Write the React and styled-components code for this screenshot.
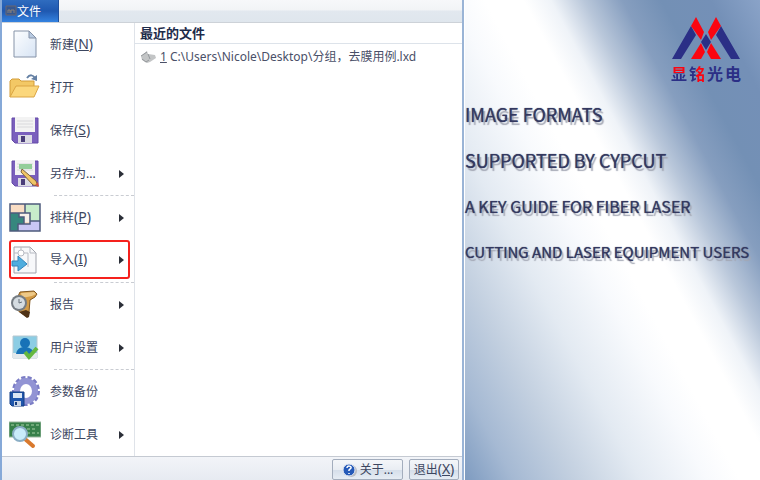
import React from "react";
import styled, { createGlobalStyle } from "styled-components";

const GlobalStyle = createGlobalStyle`
  * {
    box-sizing: border-box;
  }
  body {
    margin: 0;
    font-family: "Noto Sans", "Noto Sans CJK SC", sans-serif;
    font-size: 12px;
    color: #3c4660;
  }
  button {
    font: inherit;
    color: inherit;
    cursor: pointer;
  }
`;

const Page = styled.div`
  display: grid;
  grid-template-columns: minmax(0, 464fr) minmax(0, 296fr);
  min-height: 100vh;
`;

const Window = styled.section`
  display: flex;
  flex-direction: column;
  border-left: 2px solid #86a9d8;
  border-right: 2px solid #9ab4d6;
  background: #fff;
`;

const TitleBar = styled.header`
  display: flex;
  height: 23px;
  border-bottom: 1px solid #cdd2d8;
  background: linear-gradient(#f7f8fa 0%, #f2f4f6 45%, #e2e8ef 50%, #dfe6ed 100%);
`;

const FileTab = styled.button`
  display: flex;
  align-items: center;
  width: 57px;
  padding: 0 3px;
  border: 0;
  border-right: 1px solid #1f4f9c;
  background: linear-gradient(#2f6cbf 0%, #1f58b0 50%, #3482e0 100%);
  color: #fff;
`;

const Body = styled.div`
  display: flex;
  flex: 1;
`;

const Menu = styled.nav`
  display: flex;
  flex-direction: column;
  width: 133px;
  border-right: 1px solid #dfe3e9;
`;

const MenuItem = styled.button`
  display: flex;
  align-items: center;
  gap: 9px;
  height: ${(props) => (props.$marked ? "39px" : "43px")};
  margin: ${(props) => (props.$marked ? "1px 4px 3px 7px" : "0")};
  padding: ${(props) => (props.$marked ? "0 4px 0 0" : "0 10px 0 7px")};
  border: ${(props) => (props.$marked ? "2px solid #f5211d" : "0")};
  border-radius: 3px;
  background: none;
  text-align: left;

  svg:first-child {
    flex: none;
    margin-left: ${(props) => (props.$marked ? "-2px" : "0")};
  }
`;

const Label = styled.span`
  flex: 1;
  line-height: 20px;
  white-space: nowrap;
`;

const Hotkey = styled.span`
  font-size: 14px;
`;

const Separator = styled.hr`
  width: 80px;
  height: 1px;
  margin: 0 0 0 auto;
  border: 0;
  border-top: 1px dashed #c9ccd2;
`;

const Recent = styled.main`
  flex: 1;
  min-width: 0;
`;

const RecentTitle = styled.h2`
  margin: 0;
  padding: 0 5px;
  border-bottom: 1px solid #dde3ea;
  font-size: 13px;
  line-height: 20px;
  color: #1d2b4a;
`;

const RecentFile = styled.a`
  display: flex;
  align-items: center;
  gap: 4px;
  padding: 0 5px;
  line-height: 26px;
  color: #4a5068;
  text-decoration: none;
  white-space: nowrap;
`;

const Footer = styled.footer`
  display: flex;
  justify-content: flex-end;
  gap: 6px;
  padding: 2px 3px 1px;
  border-top: 1px solid #c5cad2;
  background: linear-gradient(#f2f4f8, #e6eaf1);
`;

const FooterButton = styled.button`
  display: flex;
  align-items: center;
  justify-content: center;
  gap: 2px;
  width: ${(props) => (props.$wide ? "71px" : "50px")};
  height: 21px;
  padding: 0;
  border: 1px solid #a3adbd;
  border-radius: 2px;
  background: linear-gradient(#f4f6f9 0%, #e9edf3 50%, #d5deea 52%, #e6ecf4 100%);
  line-height: 18px;
  white-space: nowrap;
`;

const Banner = styled.aside`
  display: flex;
  flex-direction: column;
  border-left: 1px solid #fff;
  background: linear-gradient(
    62deg,
    #7e9bc0 0%,
    #a5b9d3 9%,
    #c3d0e0 20%,
    #e3eaf2 32%,
    #f8fafd 44%,
    #ffffff 50%,
    #ffffff 57%,
    #eff3f8 62%,
    #b9c7da 68%,
    #869ebf 75%,
    #7390b5 82%,
    #7490b7 91%,
    #8aa3c8 100%
  );
`;

const Brand = styled.div`
  display: flex;
  flex-direction: column;
  align-items: center;
  align-self: flex-end;
  padding: 17px 19px 0 0;
`;

const BrandName = styled.div`
  display: flex;
  gap: 2px;
  font-family: "Noto Sans CJK SC", sans-serif;
  font-size: 16px;
  font-weight: 700;
  line-height: 24px;
  color: #2b2f86;
`;

const TwoTone = styled.span`
  background: linear-gradient(${(props) => props.$tones});
  background-clip: text;
  color: transparent;
`;

const Headline = styled.h1`
  display: flex;
  flex-direction: column;
  margin: 0;
  padding-top: 6px;
  font-family: "Noto Sans CJK SC", sans-serif;
  font-weight: 400;
  line-height: 46px;
  color: #343960;
  text-shadow: 0 0 1px #3c4168, 2px 3px 1px #a3a7b4;
  white-space: nowrap;
`;

const HeadlineRow = styled.span`
  font-size: ${(props) => props.$size}px;
`;

const Icon = ({ children }) => (
  <svg width="32" height="32" viewBox="0 0 32 32" aria-hidden="true">
    {children}
  </svg>
);

const Floppy = () => (
  <>
    <path d="M3 3h26v25H6l-3-3z" fill="#7a5fbd" stroke="#654ba8" />
    <path d="M6 2h20v15H6z" fill="#f3f3f3" />
    <path d="M8 6h16M8 9h16M8 12h16" stroke="#d9d9dc" />
    <path d="M9 20h14v8H9z" fill="#dcdbe4" />
    <path d="M12 21h4v6h-4z" fill="#4a3d79" />
  </>
);

const icons = {
  new: (
    <Icon>
      <defs>
        <linearGradient id="paper" x1="0" y1="0" x2="1" y2="1">
          <stop offset="0" stopColor="#fdfeff" />
          <stop offset="1" stopColor="#d7e4f4" />
        </linearGradient>
      </defs>
      <path d="M5 2h15l7 7v19H5z" fill="url(#paper)" stroke="#8693a8" />
      <path d="M20 2v7h7z" fill="#b9cbe2" stroke="#8693a8" />
    </Icon>
  ),
  open: (
    <Icon>
      <path d="M1 25V9l2-2h7l2 2h13v5" fill="#f3c865" stroke="#d39c38" />
      <path d="M1 25l6-11h23l-5 11z" fill="#fbd77c" stroke="#dba544" />
      <path d="M18 6c3-4 6-3 8 0" fill="none" stroke="#6480a4" strokeWidth="2" />
      <path d="M22 7l6 2V3z" fill="#6480a4" />
    </Icon>
  ),
  save: (
    <Icon>
      <Floppy />
    </Icon>
  ),
  saveAs: (
    <Icon>
      <Floppy />
      <path d="M10 6h13v5H10z" fill="#93ce9a" />
      <path d="M13 11l14 12 2 5-5-1-12-13z" fill="#f0c565" stroke="#7d6540" />
      <path d="M26 27l4 2-1-5z" fill="#d15440" />
    </Icon>
  ),
  nest: (
    <Icon>
      <path d="M1 2h30v27H1z" fill="#f9ddc4" />
      <path d="M16 2h15v17H21v-8h-5z" fill="#c8edcb" />
      <path d="M9 11h12v9H9z" fill="#f7f0e8" />
      <path d="M1 11h9v4h5v7H9v7H1z" fill="#36877e" />
      <path d="M9 22h12v-3h10v10H9z" fill="#c9c6f4" />
      <path
        d="M1 2h30v27H1zM1 11h9v4h5v7H9v7M16 2v9h5v8h10M10 11h6M15 22h6v-3"
        fill="none"
        stroke="#4e5b7c"
        strokeWidth="1.5"
      />
    </Icon>
  ),
  import: (
    <Icon>
      <path d="M5 3h16l6 6v20H5z" fill="#f7f8fa" stroke="#a0a3ac" />
      <path d="M21 3v6h6M5 9h4M14 9h5v14M12 3v3" fill="none" stroke="#b7bac2" />
      <circle cx="12" cy="9" r="3" fill="#fff" stroke="#b7bac2" />
      <path d="M3 17h6v-5l9 8-9 7v-5H3z" fill="#4fadde" stroke="#3285bb" />
    </Icon>
  ),
  report: (
    <Icon>
      <path d="M11 3l14-1 3 3-2 3-5 3-1 12-2 5-14-10z" fill="#d39a45" stroke="#825821" />
      <path d="M12 4l13-1 2 2-4 2-10 2z" fill="#eec987" />
      <path d="M20 28l1-5-4-2-7 2 8 6z" fill="#4f3216" />
      <circle cx="10" cy="14" r="8" fill="#757c83" />
      <circle cx="10" cy="14" r="6" fill="#d5dce1" />
      <path d="M10 10v4l3-1" fill="none" stroke="#67717b" />
    </Icon>
  ),
  user: (
    <Icon>
      <path d="M4 4h24v22H4z" fill="#8ccde4" stroke="#b6c8d0" />
      <path d="M4 21h24v5H4z" fill="#e3e9ec" />
      <circle cx="16" cy="11" r="5" fill="#1872b7" />
      <path d="M7 22c1-6 5-7 9-7s8 2 9 7z" fill="#1872b7" />
      <path d="M16 20l4 5 8-9" fill="none" stroke="#64b83f" strokeWidth="4" />
    </Icon>
  ),
  backup: (
    <Icon>
      <ellipse cx="17" cy="15" rx="12" ry="13" fill="none" stroke="#7b7dc5" strokeWidth="4" strokeDasharray="4 2" />
      <ellipse cx="17" cy="15" rx="9" ry="10" fill="none" stroke="#9294d4" strokeWidth="6" />
      <path d="M1 16h14v14H3l-2-2z" fill="#1f56ac" stroke="#153e84" />
      <path d="M4 17h9v5H4z" fill="#dbe7f5" />
      <path d="M5 25h7v5H5z" fill="#c9d4e5" />
      <path d="M6 26h2v3H6z" fill="#173c7c" />
    </Icon>
  ),
  diagnose: (
    <Icon>
      <path d="M0 3h32v15H0z" fill="#36804a" stroke="#9bb8a0" />
      <path d="M2 6h28M18 10h10M18 14h12" stroke="#a6d0a5" strokeDasharray="3 2" />
      <path d="M16 20l8 7" stroke="#d9792d" strokeWidth="4" strokeLinecap="round" />
      <circle cx="11" cy="15" r="7" fill="#c9ebfa" stroke="#8aaec5" strokeWidth="2" />
    </Icon>
  ),
};

const menu = [
  { icon: "new", text: "新建", hotkey: "N" },
  { icon: "open", text: "打开" },
  { icon: "save", text: "保存", hotkey: "S" },
  { icon: "saveAs", text: "另存为...", more: true, separator: true },
  { icon: "nest", text: "排样", hotkey: "P", more: true },
  { icon: "import", text: "导入", hotkey: "I", more: true, marked: true, separator: true },
  { icon: "report", text: "报告", more: true },
  { icon: "user", text: "用户设置", more: true, separator: true },
  { icon: "backup", text: "参数备份" },
  { icon: "diagnose", text: "诊断工具", more: true },
];

const Arrow = () => (
  <svg width="5" height="8" viewBox="0 0 5 8" aria-hidden="true">
    <path d="M0 0l5 4-5 4z" fill="#2b2f38" />
  </svg>
);

export default function App() {
  return (
    <Page>
      <GlobalStyle />
      <Window>
        <TitleBar>
          <FileTab>
            <svg width="12" height="12" viewBox="0 0 12 12" aria-hidden="true">
              <path d="M1 1h10v9H1z" fill="#37588f" stroke="#6b6770" />
              <path d="M3 8V5h2v3M6 8V5h3v3" fill="none" stroke="#8b8078" />
            </svg>
            文件
          </FileTab>
        </TitleBar>
        <Body>
          <Menu>
            {menu.map((item) => (
              <React.Fragment key={item.icon}>
                <MenuItem $marked={item.marked}>
                  {icons[item.icon]}
                  <Label>
                    {item.text}
                    {item.hotkey && (
                      <Hotkey>
                        (<u>{item.hotkey}</u>)
                      </Hotkey>
                    )}
                  </Label>
                  {item.more && <Arrow />}
                </MenuItem>
                {item.separator && <Separator />}
              </React.Fragment>
            ))}
          </Menu>
          <Recent>
            <RecentTitle>最近的文件</RecentTitle>
            <RecentFile href="#recent-1">
              <svg width="16" height="14" viewBox="0 0 16 14" aria-hidden="true">
                <path d="M1 6l6-5 1 3 7 1 1 3-6 4-3 1-5-3z" fill="#c3c5c6" />
                <path d="M1 6l6-4M2 9l4 3 3-2M8 4l2 5" fill="none" stroke="#94989c" />
              </svg>
              <span>
                <u>1</u> C:\Users\Nicole\Desktop\分组，去膜用例.lxd
              </span>
            </RecentFile>
          </Recent>
        </Body>
        <Footer>
          <FooterButton $wide>
            <svg width="16" height="16" viewBox="0 0 16 16" aria-hidden="true">
              <circle cx="9" cy="9" r="6" fill="#b9bcc2" />
              <circle cx="7" cy="8" r="6" fill="#2459b8" stroke="#dfe6f2" />
              <path d="M5 6c0-3 5-2 4 0L7 8v1M7 11v1" fill="none" stroke="#fff" strokeWidth="1.5" />
            </svg>
            关于...
          </FooterButton>
          <FooterButton>
            <span>
              退出
              <Hotkey>
                (<u>X</u>)
              </Hotkey>
            </span>
          </FooterButton>
        </Footer>
      </Window>
      <Banner>
        <Brand>
          <svg width="70" height="44" viewBox="-1 0 70 44" aria-hidden="true">
            <path d="M0 42L19 9l5 9L9 42zM68 42L49 9l-5 9 15 24z" fill="#2b2f86" />
            <path d="M24 0l8 15-3 8L19 9zM44 0l-8 15 3 8L49 9z" fill="#fb0510" />
            <path d="M34 17l5 8-5 8-5-8z" fill="#2b2f86" />
            <path d="M29 26l4 9-4 7H19zM39 26l-4 9 4 7h10z" fill="#fb0510" />
          </svg>
          <BrandName>
            <TwoTone $tones="#fb0510 50%, #2b2f86 50%">显</TwoTone>
            <TwoTone $tones="90deg, #2b2f86 45%, #fb0510 45%">铭</TwoTone>
            <span>光</span>
            <span>电</span>
          </BrandName>
        </Brand>
        <Headline>
          <HeadlineRow $size={18}>IMAGE FORMATS</HeadlineRow>
          <HeadlineRow $size={18}>SUPPORTED BY CYPCUT</HeadlineRow>
          <HeadlineRow $size={16}>A KEY GUIDE FOR FIBER LASER</HeadlineRow>
          <HeadlineRow $size={15}>CUTTING AND LASER EQUIPMENT USERS</HeadlineRow>
        </Headline>
      </Banner>
    </Page>
  );
}
